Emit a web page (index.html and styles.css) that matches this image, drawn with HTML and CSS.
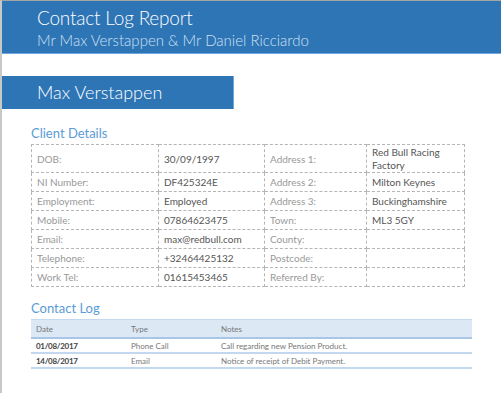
FILE: index.html
```html
<!DOCTYPE html>
<html lang="en">
<head>
    <meta charset="UTF-8">
    <title>Contact Log Report</title>
    <link rel="stylesheet" href="styles.css">
</head>
<body>
<div class="page">
    <div class="header">
        <h1>Contact Log Report</h1>
        <div class="subtitle">Mr Max Verstappen &amp; Mr Daniel Ricciardo</div>
    </div>

    <div class="client-bar">Max Verstappen</div>

    <div class="section">
        <h3>Client Details</h3>
        <table class="details">
            <colgroup>
                <col style="width: 127px">
                <col style="width: 106px">
                <col style="width: 102px">
                <col style="width: 98px">
            </colgroup>
            <tr class="tall">
                <td class="label">DOB:</td>
                <td>30/09/1997</td>
                <td class="label">Address 1:</td>
                <td class="wrap">Red Bull Racing Factory</td>
            </tr>
            <tr>
                <td class="label">NI Number:</td>
                <td>DF425324E</td>
                <td class="label">Address 2:</td>
                <td>Milton Keynes</td>
            </tr>
            <tr>
                <td class="label">Employment:</td>
                <td>Employed</td>
                <td class="label">Address 3:</td>
                <td>Buckinghamshire</td>
            </tr>
            <tr>
                <td class="label">Mobile:</td>
                <td>07864623475</td>
                <td class="label">Town:</td>
                <td>ML3 5GY</td>
            </tr>
            <tr>
                <td class="label">Email:</td>
                <td>max@redbull.com</td>
                <td class="label">County:</td>
                <td></td>
            </tr>
            <tr>
                <td class="label">Telephone:</td>
                <td>+32464425132</td>
                <td class="label">Postcode:</td>
                <td></td>
            </tr>
            <tr>
                <td class="label">Work Tel:</td>
                <td>01615453465</td>
                <td class="label">Referred By:</td>
                <td></td>
            </tr>
        </table>
    </div>

    <div class="section">
        <h3>Contact Log</h3>
        <table class="log">
            <thead>
                <tr>
                    <th class="c-date">Date</th>
                    <th class="c-type">Type</th>
                    <th>Notes</th>
                </tr>
            </thead>
            <tbody>
                <tr>
                    <td class="date">01/08/2017</td>
                    <td>Phone Call</td>
                    <td>Call regarding new Pension Product.</td>
                </tr>
                <tr>
                    <td class="date">14/08/2017</td>
                    <td>Email</td>
                    <td>Notice of receipt of Debit Payment.</td>
                </tr>
            </tbody>
        </table>
    </div>
</div>
</body>
</html>
```

FILE: styles.css
```css
html, body {
    height: 100%;
}

body {
    margin: 0;
    background-color: #fff;
    font-family: Lato, "Open Sans", sans-serif;
}

.page {
    min-height: 100%;
    box-sizing: border-box;
    border-top: 1px solid #a6a6a6;
    border-left: 2px solid #c8c8c8;
}

.header {
    background-color: #2e75b6;
    border-bottom: 1px solid #6fa8e0;
    padding: 4px 0 5px 35px;
    height: 43px;
}

.header h1 {
    margin: 0;
    font-size: 19px;
    font-weight: 300;
    letter-spacing: -0.2px;
    line-height: 25px;
    color: #fff;
}

.subtitle {
    font-size: 15px;
    font-weight: 300;
    line-height: 20px;
    color: #cfe0f2;
}

.client-bar {
    margin-top: 22px;
    width: 196px;
    height: 33px;
    padding-left: 35px;
    background-color: #2e75b6;
    border-right: 1px solid #6fa8e0;
    color: #fff;
    font-size: 18px;
    font-weight: 300;
    line-height: 33px;
}

.section {
    padding-left: 29px;
}

.section h3 {
    margin: 15px 0 0;
    font-size: 13px;
    font-weight: 400;
    line-height: 18px;
    color: #5b9bd5;
}

.details {
    border-collapse: collapse;
    table-layout: fixed;
    width: 433px;
    font-size: 10px;
    margin-top: 2px;
}

.details td {
    border: 1px dashed #b5b5b5;
    height: 18px;
    padding: 0 5px;
    color: #555;
    vertical-align: middle;
}

.details tr.tall td {
    height: 27px;
}

.details td.label {
    color: #999;
}

.details td.wrap {
    line-height: 13px;
}

.section:last-child h3 {
    margin-top: 12px;
}

.log {
    border-collapse: collapse;
    width: 441px;
    font-size: 8px;
    margin-top: 2px;
}

.log th {
    background-color: #dde8f5;
    border-top: 1px solid #c5d8ee;
    border-bottom: 2px solid #a9c6e8;
    height: 17px;
    padding: 0 5px;
    font-weight: 400;
    color: #777;
    text-align: left;
}

.log td {
    border-bottom: 2px solid #c3d7ef;
    height: 13px;
    padding: 0 5px;
    color: #777;
}

.log th.c-date {
    width: 85px;
}

.log th.c-type {
    width: 80px;
}

.log td.date {
    color: #444;
    font-weight: 700;
    letter-spacing: -0.3px;
}
```
